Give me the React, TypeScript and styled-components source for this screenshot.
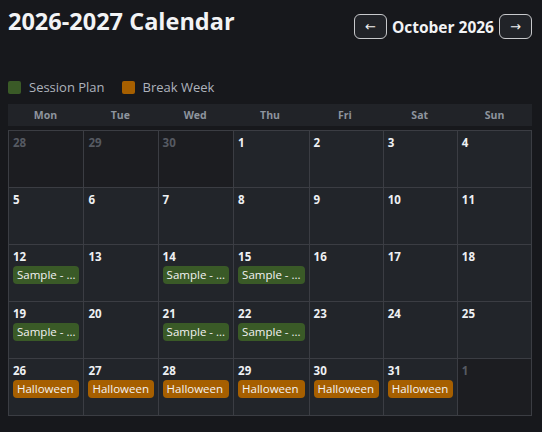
import React from "react";
import styled, { createGlobalStyle } from "styled-components";

const GlobalStyle = createGlobalStyle`
  html, body {
    margin: 0;
    background: #17181c;
  }
  body {
    padding: 8px;
    font-family: "Open Sans", "Noto Sans", sans-serif;
    color: #e6e8ec;
  }
`;

type Kind = "session" | "break";

interface Day {
  n: number;
  outside?: boolean;
  event?: { kind: Kind; label: string };
}

const session = { kind: "session" as Kind, label: "Sample - ..." };
const halloween = { kind: "break" as Kind, label: "Halloween" };

const days: Day[] = [
  { n: 28, outside: true },
  { n: 29, outside: true },
  { n: 30, outside: true },
  { n: 1 },
  { n: 2 },
  { n: 3 },
  { n: 4 },
  { n: 5 },
  { n: 6 },
  { n: 7 },
  { n: 8 },
  { n: 9 },
  { n: 10 },
  { n: 11 },
  { n: 12, event: session },
  { n: 13 },
  { n: 14, event: session },
  { n: 15, event: session },
  { n: 16 },
  { n: 17 },
  { n: 18 },
  { n: 19, event: session },
  { n: 20 },
  { n: 21, event: session },
  { n: 22, event: session },
  { n: 23 },
  { n: 24 },
  { n: 25 },
  { n: 26, event: halloween },
  { n: 27, event: halloween },
  { n: 28, event: halloween },
  { n: 29, event: halloween },
  { n: 30, event: halloween },
  { n: 31, event: halloween },
  { n: 1, outside: true },
];

const weekdays = ["Mon", "Tue", "Wed", "Thu", "Fri", "Sat", "Sun"];

const colors: Record<Kind, string> = {
  session: "#3a5a27",
  break: "#a65f00",
};

export default function App() {
  return (
    <Page>
      <GlobalStyle />
      <Header>
        <Title>2026-2027 Calendar</Title>
        <Nav>
          <NavButton>←</NavButton>
          <MonthLabel>October 2026</MonthLabel>
          <NavButton>→</NavButton>
        </Nav>
      </Header>

      <Legend>
        <LegendItem>
          <Swatch $color={colors.session} />
          Session Plan
        </LegendItem>
        <LegendItem>
          <Swatch $color={colors.break} />
          Break Week
        </LegendItem>
      </Legend>

      <WeekHeader>
        {weekdays.map((d) => (
          <WeekDay key={d}>{d}</WeekDay>
        ))}
      </WeekHeader>

      <Grid>
        {days.map((d, i) => (
          <Cell key={i} $outside={d.outside}>
            <DayNumber $outside={d.outside}>{d.n}</DayNumber>
            {d.event && (
              <Chip $color={colors[d.event.kind]}>{d.event.label}</Chip>
            )}
          </Cell>
        ))}
      </Grid>
    </Page>
  );
}

const Page = styled.div`
  width: 524px;
`;

const Header = styled.div`
  display: flex;
  justify-content: space-between;
  align-items: flex-start;
  height: 40px;
`;

const Title = styled.h1`
  margin: 0;
  font-size: 23.5px;
  line-height: 26px;
  font-weight: 700;
  color: #f2f3f5;
`;

const Nav = styled.div`
  display: flex;
  align-items: center;
  gap: 5px;
  margin-top: 6px;
`;

const NavButton = styled.button`
  width: 33px;
  height: 25px;
  padding: 0;
  border: 1px solid #c8c9cc;
  border-radius: 6px;
  background: #212328;
  color: #f0f0f0;
  font-family: "DejaVu Sans", sans-serif;
  font-size: 13px;
  line-height: 1;
`;

const MonthLabel = styled.span`
  font-size: 15.5px;
  font-weight: 700;
  color: #f2f3f5;
`;

const Legend = styled.div`
  display: flex;
  gap: 17px;
  margin-top: 29px;
  height: 20px;
  align-items: center;
`;

const LegendItem = styled.div`
  display: flex;
  align-items: center;
  gap: 8px;
  font-size: 13px;
  color: #aeb3bc;
`;

const Swatch = styled.span<{ $color: string }>`
  width: 13px;
  height: 13px;
  border-radius: 2px;
  background: ${(p) => p.$color};
`;

const WeekHeader = styled.div`
  display: grid;
  grid-template-columns: repeat(7, 1fr);
  margin-top: 7px;
  height: 22px;
  background: #212328;
`;

const WeekDay = styled.div`
  display: flex;
  align-items: center;
  justify-content: center;
  font-size: 10.5px;
  font-weight: 700;
  color: #8e949e;
`;

const Grid = styled.div`
  display: grid;
  grid-template-columns: repeat(7, 1fr);
  grid-auto-rows: 57px;
  margin-top: 4px;
  border-top: 1px solid #3b3d43;
  border-left: 1px solid #3b3d43;
`;

const Cell = styled.div<{ $outside?: boolean }>`
  display: flex;
  flex-direction: column;
  gap: 3px;
  padding: 5px 4px;
  border-right: 1px solid #3b3d43;
  border-bottom: 1px solid #3b3d43;
  background: ${(p) => (p.$outside ? "#1c1d21" : "#22252a")};
`;

const DayNumber = styled.div<{ $outside?: boolean }>`
  font-size: 11.5px;
  font-weight: 700;
  line-height: 13px;
  color: ${(p) => (p.$outside ? "#565a62" : "#eef0f3")};
`;

const Chip = styled.div<{ $color: string }>`
  height: 18px;
  padding: 0 4px;
  border-radius: 4px;
  background: ${(p) => p.$color};
  color: #f3f3f3;
  font-size: 11.5px;
  line-height: 18px;
  white-space: nowrap;
  overflow: hidden;
`;
